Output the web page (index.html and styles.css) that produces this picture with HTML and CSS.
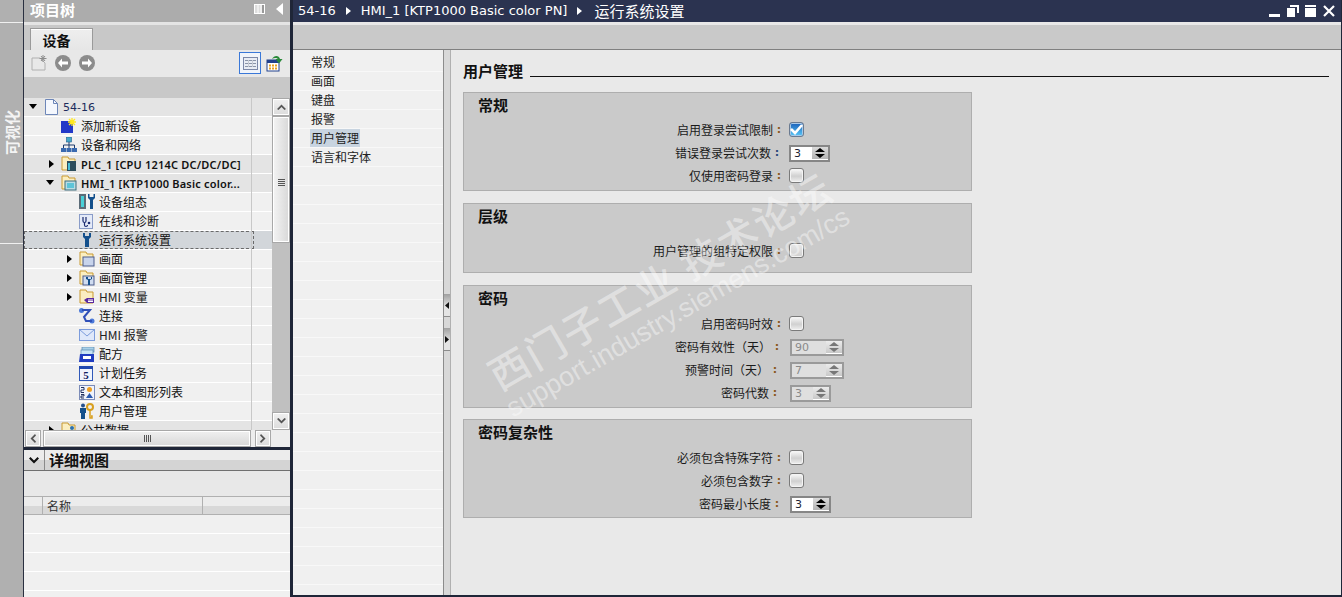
FILE: index.html
```html
<!DOCTYPE html>
<html lang="zh">
<head>
<meta charset="utf-8">
<title>运行系统设置</title>
<link rel="stylesheet" href="styles.css">
</head>
<body>
<svg class="defs" width="0" height="0">
  <defs>
    <symbol id="i-folder" viewBox="0 0 16 16"><path d="M1 1h6l1 2h6v11H1z" fill="#fbeec0" stroke="#c99a32"/></symbol>
    <symbol id="i-wrench" viewBox="0 0 16 16"><path d="M4 1v4l2 2v8h4V7l2-2V1l-2 0v3H6V1z" fill="#14508c"/></symbol>
  </defs>
</svg>
<div class="app">
  <aside class="strip">
    <div class="strip-top"></div>
    <div class="strip-mid"><span class="strip-label">可视化</span></div>
    <div class="strip-rest"></div>
  </aside>

  <section class="left">
    <header class="pt-head">
      <span class="pt-title">项目树</span>
      <svg class="pt-ctl" width="12" height="12" viewBox="0 0 12 12"><rect x="0.5" y="1.5" width="10" height="9" fill="#ddd" stroke="#fff"/><path d="M4 2v8M7 2v8" stroke="#fff"/><rect x="8" y="2" width="2" height="8" fill="#999"/></svg>
      <svg class="pt-ctl pt-ctl-b" width="8" height="12" viewBox="0 0 8 12"><path d="M7 0v12L0 6z" fill="#fff"/></svg>
    </header>
    <div class="tabs"><div class="tab">设备</div></div>
    <div class="toolbar">
      <svg width="16" height="16" viewBox="0 0 16 16"><path d="M1 3h8l5 5v7H1z" fill="#e8e8e8" stroke="#b0b0b0"/><path d="M12 0v7M8.500 3.500h7M10 1l4 5M14 1l-4 5" stroke="#8c8c8c"/></svg>
      <svg width="16" height="16" viewBox="0 0 16 16"><circle cx="8" cy="8" r="8" fill="#8c8c8c"/><path d="M3 8l4-4.500v3h6v3H7v3z" fill="#fff"/></svg>
      <svg width="16" height="16" viewBox="0 0 16 16"><circle cx="8" cy="8" r="8" fill="#8c8c8c"/><path d="M13 8L9 3.500v3H3v3h6v3z" fill="#fff"/></svg>
      <span class="tb-gap"></span>
      <span class="tb-active"><svg width="15" height="13" viewBox="0 0 15 13"><rect x="0.500" y="0.500" width="14" height="12" fill="#e8ecf4" stroke="#7c88a8"/><path d="M2 3.500h11M2 6.500h11M2 9.500h11" stroke="#8a94a8"/><path d="M5.500 3v7M9.500 3v7" stroke="#c8ccd4"/></svg></span>
      <svg width="17" height="17" viewBox="0 0 17 17"><rect x="1" y="5" width="12" height="11" fill="#fff" stroke="#20408c"/><rect x="1" y="5" width="12" height="3" fill="#20408c"/><path d="M3 9.500h2v2H3zM6 9.500h2v2H6zM9 9.500h2v2H9zM3 12.500h2v2H3zM6 12.500h2v2H6zM9 12.500h2v2H9z" fill="#e8a020"/><path d="M6 4c2-4 7-4 8 0h2.500L13 8.500 9.500 4H12c-1-1.500-4-1.500-6 0z" fill="#2a8a3a"/></svg>
    </div>
    <div class="gray-band"></div>

    <div class="tree-wrap">
      <div class="tree">
        <div class="row top"><span class="tw-down lv0"></span>
          <svg class="ic ic-doc" width="13" height="16" viewBox="0 0 13 16"><path d="M.5.500h8l4 4v11H.5z" fill="#f4f7fd" stroke="#6d86b8"/><path d="M8.500.500v4h4" fill="none" stroke="#6d86b8"/></svg>
          <span class="rt t0">54-16</span></div>
        <div class="row l1">
          <svg class="ic" width="16" height="16" viewBox="0 0 16 16"><rect x="0" y="3" width="12" height="12" fill="#2238c8"/><path d="M11 0v8M7 4h8M8 1l6 6M14 1L8 7" stroke="#ffe820" stroke-width="1.300"/></svg>
          <span class="rt">添加新设备</span></div>
        <div class="row l1">
          <svg class="ic" width="16" height="16" viewBox="0 0 16 16"><rect x="5.500" y="0" width="5" height="5" fill="#46a8c8" stroke="#1c5a8c" stroke-width=".6"/><path d="M8 5v3M2.500 11V8h11v3M8 8v3" stroke="#1c3a6c" fill="none"/><rect x="0" y="11" width="5" height="4" fill="#3a6ab0"/><rect x="5.500" y="11" width="5" height="4" fill="#3a6ab0"/><rect x="11" y="11" width="5" height="4" fill="#3a6ab0"/></svg>
          <span class="rt">设备和网络</span></div>
        <div class="row top l1"><span class="tw-right"></span>
          <svg class="ic" width="16" height="16" viewBox="0 0 16 16"><use href="#i-folder"/><rect x="6" y="5" width="9" height="10" fill="#2c4c5c"/><rect x="7" y="7" width="2" height="7" fill="#4ac0d8"/></svg>
          <span class="rt rt-b">PLC_1 [CPU 1214C DC/DC/DC]</span></div>
        <div class="row top l1"><span class="tw-down"></span>
          <svg class="ic" width="16" height="16" viewBox="0 0 16 16"><use href="#i-folder"/><rect x="4" y="6" width="11" height="9" fill="#b8dce4" stroke="#3c6c7c"/><rect x="6" y="8" width="7" height="5" fill="#5cc4d8"/></svg>
          <span class="rt rt-b">HMI_1 [KTP1000 Basic color...</span></div>
        <div class="row l2">
          <svg class="ic" width="16" height="16" viewBox="0 0 16 16"><rect x="0" y="0" width="7" height="15" fill="#5c6c78"/><rect x="2" y="2" width="3" height="11" fill="#48d0d8"/><path d="M9 0v4l2 2v9h3V6l2-2V0h-1.500v3h-4V0z" fill="#14508c"/></svg>
          <span class="rt">设备组态</span></div>
        <div class="row l2">
          <svg class="ic ic-n" width="14" height="15" viewBox="0 0 14 15"><rect x=".5" y=".5" width="13" height="14" fill="#e4eaf8" stroke="#8a9cc8"/><path d="M4 3v4c0 2 3 2 3 0V3M5.500 9v2c0 2 3 2 3 0" fill="none" stroke="#1a2a70" stroke-width="1.200"/><circle cx="10" cy="9" r="1.300" fill="#1a2a70"/></svg>
          <span class="rt">在线和诊断</span></div>
        <div class="row l2 sel">
          <svg class="ic" width="16" height="16" viewBox="0 0 16 16"><use href="#i-wrench"/></svg>
          <span class="rt">运行系统设置</span></div>
        <div class="row l2"><span class="tw-right"></span>
          <svg class="ic" width="16" height="16" viewBox="0 0 16 16"><use href="#i-folder"/><rect x="4" y="6" width="11" height="9" fill="#c8d4ec" stroke="#4c5c8c"/></svg>
          <span class="rt">画面</span></div>
        <div class="row l2"><span class="tw-right"></span>
          <svg class="ic" width="16" height="16" viewBox="0 0 16 16"><use href="#i-folder"/><rect x="4" y="6" width="11" height="9" fill="#d0dcf0" stroke="#4c5c8c"/><path d="M7 7v2l2 1v5h2v-5l2-1V7h-1v2h-3V7z" fill="#14508c"/></svg>
          <span class="rt">画面管理</span></div>
        <div class="row l2"><span class="tw-right"></span>
          <svg class="ic" width="16" height="16" viewBox="0 0 16 16"><use href="#i-folder"/><path d="M5 11l3-2h7v5H8z" fill="#5a2aa0"/><path d="M9 11h5M9 12.500h5" stroke="#fff"/></svg>
          <span class="rt rt-hmi">HMI 变量</span></div>
        <div class="row l2">
          <svg class="ic" width="16" height="16" viewBox="0 0 16 16"><circle cx="2.500" cy="2.500" r="2.500" fill="#4a78d8"/><circle cx="13" cy="13" r="2.500" fill="#4a78d8"/><path d="M3 2h8l-6 7 2 4h6" fill="none" stroke="#3050b8" stroke-width="2"/></svg>
          <span class="rt">连接</span></div>
        <div class="row l2">
          <svg class="ic" width="16" height="12" viewBox="0 0 16 12"><rect x=".5" y=".5" width="15" height="11" fill="#dfe8fa" stroke="#7c9cdc"/><path d="M.5.500L8 7l7.500-6.500" fill="none" stroke="#7c9cdc"/></svg>
          <span class="rt rt-hmi">HMI 报警</span></div>
        <div class="row l2">
          <svg class="ic" width="16" height="15" viewBox="0 0 16 15"><rect x="3" y="0" width="12" height="5" fill="#a8d0e8" stroke="#5a88b0" stroke-width=".7"/><rect x="2" y="3" width="12" height="5" fill="#c8e4f4" stroke="#5a88b0" stroke-width=".7"/><path d="M1 7h14v8H0z" fill="#1f3cc0"/><rect x="4" y="9" width="8" height="3" fill="#fff"/></svg>
          <span class="rt">配方</span></div>
        <div class="row l2">
          <svg class="ic ic-n" width="14" height="15" viewBox="0 0 14 15"><rect x=".5" y=".5" width="13" height="14" fill="#f0f4fc" stroke="#3058b8"/><rect width="14" height="3" fill="#2048b0"/><text x="7" y="13" class="ic-num">5</text></svg>
          <span class="rt">计划任务</span></div>
        <div class="row l2">
          <svg class="ic" width="16" height="15" viewBox="0 0 16 15"><rect x=".5" y=".5" width="15" height="14" fill="#f0f4fc" stroke="#7c8cb8"/><circle cx="10.500" cy="4.500" r="2.500" fill="#f0a020"/><path d="M7 13l3.500-5 3.500 5z" fill="#2a5ab0"/><path d="M2 2.500h3v2.500H2v2.500h3M2 9.500h3v1.500H2v2h3" fill="none" stroke="#203060"/></svg>
          <span class="rt">文本和图形列表</span></div>
        <div class="row l2">
          <svg class="ic" width="16" height="16" viewBox="0 0 16 16"><circle cx="4" cy="2.500" r="2" fill="#24508c"/><path d="M1 5h6v5H6v6H2v-6H1z" fill="#14508c"/><circle cx="11" cy="4" r="3" fill="none" stroke="#d8a020" stroke-width="2"/><path d="M11 7v8h2v-2h-1" fill="none" stroke="#d8a020" stroke-width="1.500"/></svg>
          <span class="rt">用户管理</span></div>
        <div class="row top l1"><span class="tw-right"></span>
          <svg class="ic" width="16" height="16" viewBox="0 0 16 16"><use href="#i-folder"/><circle cx="11" cy="6" r="2" fill="#2a70b0"/><rect x="6" y="8" width="9" height="6" fill="#3a80c0"/></svg>
          <span class="rt">公共数据</span></div>
      </div>
      <div class="vscroll">
        <button class="sb-btn"><svg width="9" height="6" viewBox="0 0 9 6"><path d="M0 5l4.500-4.500L9 5 7.500 6l-3-3-3 3z" fill="#555"/></svg></button>
        <div class="v-thumb"><span class="grip-h"></span></div>
        <div class="v-track"></div>
        <button class="sb-btn"><svg width="9" height="6" viewBox="0 0 9 6"><path d="M0 1l4.500 4.500L9 1 7.500 0l-3 3-3-3z" fill="#555"/></svg></button>
      </div>
    </div>
    <div class="hscroll">
      <button class="sb-btn sb-h"><svg width="6" height="9" viewBox="0 0 6 9"><path d="M5 0L.5 4.500 5 9l1-1.500-3-3 3-3z" fill="#555"/></svg></button>
      <div class="h-thumb"><span class="grip-v"></span></div>
      <button class="sb-btn sb-h"><svg width="6" height="9" viewBox="0 0 6 9"><path d="M1 0l4.500 4.500L1 9 0 7.500l3-3-3-3z" fill="#555"/></svg></button>
      <span class="h-corner"></span>
    </div>

    <section class="detail">
      <header class="d-head">
        <span class="d-chev"><svg width="10" height="7" viewBox="0 0 10 7"><path d="M0 1.500L1.500 0 5 3.500 8.500 0 10 1.500 5 6.500z" fill="#111"/></svg></span>
        <span class="d-title">详细视图</span>
      </header>
      <div class="d-bar"></div>
      <div class="d-cols"><span class="dc dc-a"></span><span class="dc dc-b">名称</span><span class="dc dc-c"></span></div>
      <div class="d-rows"></div>
    </section>
  </section>

  <main class="right">
    <header class="r-head">
      <span class="crumb">54-16</span><span class="sep"></span>
      <span class="crumb">HMI_1 [KTP1000 Basic color PN]</span><span class="sep"></span>
      <span class="crumb crumb-cn">运行系统设置</span>
      <span class="win">
        <svg width="12" height="12" viewBox="0 0 12 12"><rect x="0" y="9" width="11" height="3" fill="#fff"/></svg>
        <svg width="12" height="12" viewBox="0 0 12 12"><path d="M0 3h8v9H0zM3 0h9v8h-2V2H3z" fill="#fff"/></svg>
        <svg width="12" height="12" viewBox="0 0 12 12"><path d="M0 0h11v2H0zM0 3h11v9H0z" fill="#fff"/></svg>
        <svg width="12" height="12" viewBox="0 0 12 12"><path d="M1 1l10 10M11 1L1 11" stroke="#fff" stroke-width="2.200"/></svg>
      </span>
    </header>
    <div class="r-light"></div>
    <div class="r-band"></div>
    <div class="r-body">
      <nav class="nav">
        <div class="nav-i">常规</div>
        <div class="nav-i">画面</div>
        <div class="nav-i">键盘</div>
        <div class="nav-i">报警</div>
        <div class="nav-i"><span class="nav-sel">用户管理</span></div>
        <div class="nav-i">语言和字体</div>
        <div class="nav-i"></div><div class="nav-i"></div><div class="nav-i"></div><div class="nav-i"></div><div class="nav-i"></div><div class="nav-i"></div><div class="nav-i"></div><div class="nav-i"></div><div class="nav-i"></div><div class="nav-i"></div><div class="nav-i"></div><div class="nav-i"></div><div class="nav-i"></div><div class="nav-i"></div><div class="nav-i"></div><div class="nav-i"></div><div class="nav-i"></div><div class="nav-i"></div><div class="nav-i"></div><div class="nav-i"></div><div class="nav-i"></div><div class="nav-i"></div>
      </nav>
      <div class="split">
        <span class="split-btn"><svg width="4" height="7" viewBox="0 0 4 7"><path d="M4 0v7L0 3.500z" fill="#111"/></svg></span>
        <span class="split-btn"><svg width="4" height="7" viewBox="0 0 4 7"><path d="M0 0v7l4-3.500z" fill="#111"/></svg></span>
      </div>
      <div class="content">
        <div class="sec-title"><span>用户管理</span><i class="sec-line"></i></div>

        <section class="group">
          <h3 class="g-title">常规</h3>
          <div class="f"><span class="lb">启用登录尝试限制</span><span class="co">:</span><span class="cb cb-on"><svg width="13" height="11" viewBox="0 0 13 11"><path d="M1 5l4 4 7-8" fill="none" stroke="#123c80" stroke-width="2.600"/></svg></span></div>
          <div class="f f-s2"><span class="lb">错误登录尝试次数</span><span class="co co-blue">:</span><span class="sp"><span class="sp-v">3</span><span class="sp-b"></span></span></div>
          <div class="f"><span class="lb">仅使用密码登录</span><span class="co">:</span><span class="cb"></span></div>
        </section>

        <section class="group group-b">
          <h3 class="g-title">层级</h3>
          <div class="f"><span class="lb">用户管理的组特定权限</span><span class="co">:</span><span class="cb cb-fade"></span></div>
        </section>

        <section class="group group-c">
          <h3 class="g-title">密码</h3>
          <div class="f"><span class="lb">启用密码时效</span><span class="co">:</span><span class="cb"></span></div>
          <div class="f f-s2"><span class="lb">密码有效性（天）</span><span class="co">:</span><span class="sp sp-off sp-w"><span class="sp-v">90</span><span class="sp-b"></span></span></div>
          <div class="f f-s4"><span class="lb">预警时间（天）</span><span class="co">:</span><span class="sp sp-off sp-w"><span class="sp-v">7</span><span class="sp-b"></span></span></div>
          <div class="f f-s4"><span class="lb">密码代数</span><span class="co">:</span><span class="sp sp-off"><span class="sp-v">3</span><span class="sp-b"></span></span></div>
        </section>

        <section class="group group-d">
          <h3 class="g-title">密码复杂性</h3>
          <div class="f"><span class="lb">必须包含特殊字符</span><span class="co">:</span><span class="cb"></span></div>
          <div class="f"><span class="lb">必须包含数字</span><span class="co">:</span><span class="cb"></span></div>
          <div class="f f-s2"><span class="lb">密码最小长度</span><span class="co">:</span><span class="sp"><span class="sp-v">3</span><span class="sp-b"></span></span></div>
        </section>
      </div>
    </div>
  </main>
</div>
<div class="wm wm-cn">西门子工业 技术论坛</div>
<div class="wm wm-en">support.industry.siemens.com/cs</div>
</body>
</html>
```
FILE: styles.css
```css
* { box-sizing: border-box; }
html, body { margin: 0; height: 597px; overflow: hidden; }
body { font: 12px/1 "Noto Sans CJK SC", "Liberation Sans", sans-serif; color: #111; background: #eee; position: relative; }
.defs { position: absolute; }
button { padding: 0; margin: 0; font: inherit; }

.app { display: flex; height: 597px; width: 1342px; }

/* left strip */
.strip { width: 24px; flex: none; background: #b0b0b0; border-right: 1px solid #2a3040; display: flex; flex-direction: column; }
.strip-top { height: 23px; border-bottom: 1px solid #f0f0f0; }
.strip-mid { height: 221px; border-bottom: 1px solid #f0f0f0; display: flex; align-items: center; justify-content: center; }
.strip-label { writing-mode: vertical-rl; text-orientation: sideways; transform: rotate(180deg); color: #f4f4f4; font-weight: 700; font-size: 15px; }
.strip-rest { flex: 1; }

/* left panel */
.left { width: 266px; flex: none; display: flex; flex-direction: column; background: #eee; }
.pt-head { height: 22px; background: #acacac; display: flex; align-items: center; padding: 0 6px 4px 6px; flex: none; }
.pt-title { color: #fff; font-weight: 700; font-size: 15px; flex: 1; }
.pt-ctl { margin-right: 10px; }
.pt-ctl-b { margin-right: 0; }
.tabs { height: 28px; background: linear-gradient(#e4e4e4 0 3px, #c8c8c8 3px); padding: 6px 0 0 6px; flex: none; }
.tab { width: 63px; height: 22px; background: linear-gradient(#fff 0 1px, #eee 1px, #e6e6e6); border: 1px solid #9a9a9a; border-bottom: 0; font-weight: 700; font-size: 14px; display: flex; align-items: center; justify-content: center; padding-right: 10px; }
.toolbar { height: 27px; background: #e8e8e8; display: flex; align-items: center; gap: 8px; padding: 0 7px 1px 7px; flex: none; }
.tb-gap { flex: 1; }
.tb-active { width: 22px; height: 22px; border: 1px solid #3a78d8; background: #f0f4fa; display: flex; align-items: center; justify-content: center; margin-right: -3px; }
.gray-band { height: 21px; background: #c8c8c8; flex: none; }

.tree-wrap { height: 332px; display: flex; flex: none; overflow: hidden; }
.tree { width: 248px; flex: none; background: #f0f0f0; overflow: hidden; }
.row { height: 19px; display: flex; align-items: center; background: #f0f0f0; border-bottom: 1px solid #fff; position: relative; padding-left: 39px; white-space: nowrap; }
.row::after { content: ""; position: absolute; left: 227px; top: 0; bottom: -1px; width: 1px; background: #c8c8c8; }
.row.top { background: #e4e4e4; }
.row.top:first-child { padding-left: 21px; }
.row.l1 { padding-left: 37px; }
.row.l2 { padding-left: 55px; }
.ic { flex: none; margin-right: 4px; }
.ic-n { margin-right: 6px; }
.ic-doc { margin-right: 5px; }
.ic-num { font: 700 11px "Liberation Serif", serif; fill: #102060; text-anchor: middle; }
.rt { font-size: 12px; }
.t0 { font-family: "DejaVu Sans", sans-serif; font-size: 11px; color: #1c2c5c; }
.rt-b { font-family: "Noto Sans", sans-serif; font-weight: 600; font-size: 11px; letter-spacing: .2px; }
.rt-hmi { color: #222; }
.row.sel { background: #d2d6da; }
.row.sel::before { content: ""; position: absolute; left: 0; top: 0; bottom: 0; width: 228px; border: 1px dashed #6a6a6a; }
.tw-right, .tw-down { position: absolute; width: 0; height: 0; }
.tw-right { border-left: 5px solid #000; border-top: 4.500px solid transparent; border-bottom: 4.500px solid transparent; top: 5px; }
.tw-down { border-top: 5px solid #000; border-left: 4.500px solid transparent; border-right: 4.500px solid transparent; top: 6px; }
.row.l1 .tw-right { left: 25px; }
.row.l1 .tw-down { left: 22px; }
.row.l2 .tw-right { left: 43px; }
.lv0 { left: 5px; }

.vscroll { width: 18px; flex: none; background: #c0c0c0; display: flex; flex-direction: column; border-right: 0; }
.sb-btn { width: 18px; height: 18px; flex: none; background: linear-gradient(#f0f0f0, #dcdcdc); border: 1px solid #a8a8a8; box-shadow: inset 0 0 0 1px #fff; display: flex; align-items: center; justify-content: center; }
.v-thumb { height: 127px; border: 1px solid #a8a8a8; background: linear-gradient(90deg, #f4f4f4, #d8d8d8); box-shadow: inset 0 0 0 1px #fff; display: flex; align-items: center; justify-content: center; flex: none; }
.v-track { flex: 1; }
.grip-h { width: 7px; height: 7px; background: repeating-linear-gradient(#555 0 1px, transparent 1px 2px); margin-top: 6px; }
.hscroll { height: 17px; display: flex; align-items: center; background: #ededed; flex: none; padding-left: 1px; }
.sb-h { width: 16px; height: 17px; }
.h-thumb { width: 208px; height: 17px; margin: 0 4px 0 2px; border: 1px solid #a8a8a8; background: linear-gradient(#f0f0f0, #d8d8d8); box-shadow: inset 0 0 0 1px #fff; display: flex; align-items: center; justify-content: center; flex: none; }
.grip-v { width: 7px; height: 7px; background: repeating-linear-gradient(90deg, #555 0 1px, transparent 1px 2px); }
.h-corner { flex: 1; }

.detail { flex: 1; border-top: 3px solid #1f2638; display: flex; flex-direction: column; background: #f0f0f0; min-height: 0; }
.d-head { height: 21px; display: flex; background: linear-gradient(#ececec 0 50%, #d4d4d4 50%); border-bottom: 1px solid #707070; flex: none; }
.d-chev { width: 21px; border-right: 1px solid #8a8a8a; display: flex; align-items: center; justify-content: center; }
.d-title { font-weight: 700; font-size: 15px; padding-left: 4px; line-height: 19px; }
.d-bar { height: 25px; background: #e8e8e8; flex: none; }
.d-cols { height: 19px; display: flex; border-top: 1px solid #b0b0b0; border-bottom: 1px solid #b0b0b0; background: linear-gradient(#ececec 0 50%, #d8d8d8 50%); flex: none; }
.dc { border-right: 1px solid #b0b0b0; display: flex; align-items: center; }
.dc-a { width: 19px; }
.dc-b { width: 160px; padding-left: 4px; font-size: 12px; color: #333; }
.dc-c { flex: 1; border-right: 0; }
.d-rows { flex: 1; background: repeating-linear-gradient(#f0f0f0 0 18px, #fff 18px 19px); }

/* right panel */
.right { flex: 1; min-width: 0; border-left: 3px solid #1f2638; border-right: 1px solid #1f2638; border-bottom: 2px solid #1f2638; display: flex; flex-direction: column; }
.r-head { height: 22px; background: #2b3350; color: #fff; display: flex; align-items: center; padding: 0 5px 1px 5px; flex: none; }
.crumb { font-family: "DejaVu Sans", sans-serif; font-size: 13px; }
.crumb-cn { font-family: "Noto Sans CJK SC", sans-serif; font-size: 15px; margin-left: 2px; }
.sep { width: 0; height: 0; border-left: 5px solid #fff; border-top: 4px solid transparent; border-bottom: 4px solid transparent; margin: 0 10px; }
.win { margin-left: auto; display: flex; gap: 6px; padding-right: 1px; }
.r-light { height: 3px; background: #e8e8e8; flex: none; }
.r-band { height: 25px; background: #c9c9c9; border-bottom: 1px solid #808080; flex: none; }
.r-body { flex: 1; display: flex; min-height: 0; }
.nav { width: 150px; flex: none; background: #f0f0f0; padding-top: 3px; overflow: hidden; }
.nav-i { height: 19px; border-bottom: 1px solid #f8f8f8; padding-left: 18px; display: flex; align-items: center; font-size: 12px; color: #222; }
.nav-sel { background: #c8d4e0; padding: 0 1px; height: 18px; display: flex; align-items: center; margin-left: -1px; }
.split { width: 8px; flex: none; background: #d8d8d8; border-left: 1px solid #8c8c8c; border-right: 1px solid #b0b0b0; padding-top: 244px; display: flex; flex-direction: column; gap: 11px; }
.split-btn { height: 23px; background: linear-gradient(#a0a0a0, #e4e4e4 60%); border-bottom: 1px solid #8c8c8c; display: flex; align-items: center; padding-left: 1px; }
.content { flex: 1; background: #e9e9e9; padding: 12px 12px 0 12px; }
.sec-title { display: flex; align-items: center; font-weight: 700; font-size: 15px; height: 16px; margin-bottom: 14px; gap: 7px; color: #111; }
.sec-line { flex: 1; height: 1px; background: #111; margin-top: 12px; }
.group { width: 509px; background: #cacaca; border: 1px solid #aeaeae; padding: 25px 0 3px; margin-bottom: 12px; position: relative; }
.group-b { padding: 35px 0 10px; }
.group-c { padding: 26px 0 3px; margin-bottom: 11px; }
.group-d { padding: 26px 0 2px; }
.g-title { position: absolute; left: 14px; top: 2px; margin: 0; font-size: 15px; font-weight: 700; line-height: 20px; }
.f { height: 23px; display: flex; align-items: center; justify-content: flex-end; width: 321px; font-size: 12px; position: relative; }
.lb { color: #1a1a1a; white-space: nowrap; }
.co { width: 12px; text-align: center; flex: none; font-weight: 700; color: #8a5a20; font-family: "DejaVu Sans", sans-serif; font-size: 11px; }
.co-blue { color: #2a4a7a; }
.f-s2 .lb, .f-s2 .co { position: relative; left: -2px; }
.f-s4 .lb, .f-s4 .co { position: relative; left: -4px; }
.f > .cb, .f > .sp { position: absolute; left: 325px; top: 4px; }
.cb { width: 15px; height: 15px; border: 1px solid #7a7a7a; border-radius: 3px; background: linear-gradient(#fafafa, #d0d0d0 55%, #f0f0f0); box-shadow: inset 0 0 0 1px #f4f4f4; display: flex; align-items: center; justify-content: center; }
.cb-fade { background: linear-gradient(#e8e8e8, #d0d0d0); }
.cb-on { background: linear-gradient(#1a5fb8, #58c8f8); border-color: #6a7a90; box-shadow: inset 0 0 0 1px #a8c8e8; }
.cb-on svg path { stroke: #fff; }
.sp { width: 41px; height: 17px; border: 2px solid #868686; background: #fff; display: flex; }
.sp-v { flex: 1; font-family: "DejaVu Sans", sans-serif; font-size: 11px; color: #223; padding-left: 3px; line-height: 14px; }
.sp-b { width: 16px; flex: none; background: linear-gradient(#dadada, #b4b4b4); border-bottom: 1px solid #fff; position: relative; }
.sp-b::before, .sp-b::after { content: ""; position: absolute; left: 3px; border-left: 5px solid transparent; border-right: 5px solid transparent; }
.sp-b::before { top: 1px; border-bottom: 4px solid #000; }
.sp-b::after { bottom: 1px; border-top: 4px solid #000; }
.f > .sp-off { border-color: #9a9a9a; background: #dfdfdf; left: 326px; }
.sp-off .sp-v { color: #8a8a8a; }
.sp-off .sp-b { background: linear-gradient(#ececec, #c8c8c8); }
.sp-off .sp-b::before { border-bottom-color: #777; }
.sp-off .sp-b::after { border-top-color: #777; }
.f > .sp-w { width: 54px; }
.group-d .f > .sp { left: 326px; }

/* watermark */
.wm { position: absolute; color: rgba(255,255,255,.42); white-space: nowrap; transform-origin: 0 100%; transform: rotate(-30deg); pointer-events: none; }
.wm-cn { left: 502px; top: 352px; font-size: 40px; line-height: 44px; letter-spacing: 2px; font-weight: 500; }
.wm-en { left: 516px; top: 393px; font-family: "Liberation Sans", sans-serif; font-size: 27px; line-height: 30px; }
```
